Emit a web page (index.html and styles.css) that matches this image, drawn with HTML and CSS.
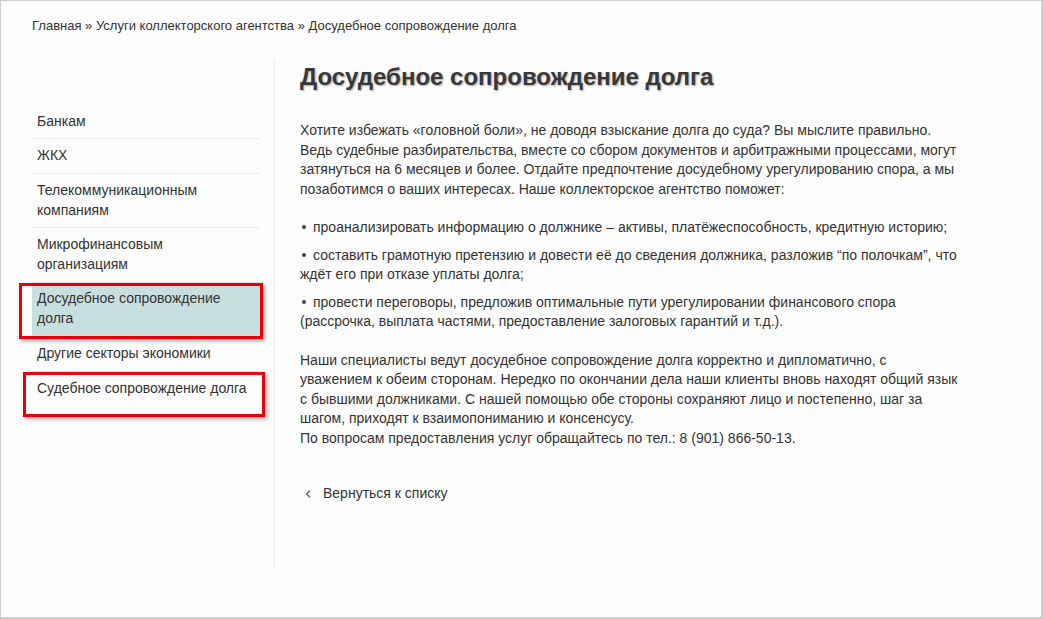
FILE: index.html
```html
<!DOCTYPE html>
<html lang="ru">
<head>
<meta charset="utf-8">
<title>Досудебное сопровождение долга</title>
<link rel="stylesheet" href="styles.css">
</head>
<body>
<div class="frame">
  <div class="breadcrumb">
    <a href="#">Главная</a> <span class="sep">»</span> <a href="#">Услуги коллекторского агентства</a> <span class="sep">»</span> <span class="current">Досудебное сопровождение долга</span>
  </div>
  <div class="columns">
    <aside class="sidebar">
      <div class="side-title">Продукция</div>
      <ul class="side-menu">
        <li><a href="#">Банкам</a></li>
        <li><a href="#">ЖКХ</a></li>
        <li><a href="#">Телекоммуникационным компаниям</a></li>
        <li><a href="#">Микрофинансовым организациям</a></li>
        <li class="active"><a href="#">Досудебное сопровождение долга</a></li>
        <li><a href="#">Другие секторы экономики</a></li>
        <li class="plain"><a href="#">Судебное сопровождение долга</a></li>
      </ul>
    </aside>
    <main class="content">
      <h1 class="title">Досудебное сопровождение долга</h1>
      <p>Хотите избежать «головной боли», не доводя взыскание долга до суда? Вы мыслите правильно. Ведь судебные разбирательства, вместе со сбором документов и арбитражными процессами, могут затянуться на 6 месяцев и более. Отдайте предпочтение досудебному урегулированию спора, а мы позаботимся о ваших интересах. Наше коллекторское агентство поможет:</p>
      <ul class="bullets">
        <li>проанализировать информацию о должнике – активы, платёжеспособность, кредитную историю;</li>
        <li>составить грамотную претензию и довести её до сведения должника, разложив “по полочкам”, что ждёт его при отказе уплаты долга;</li>
        <li>провести переговоры, предложив оптимальные пути урегулировании финансового спора (рассрочка, выплата частями, предоставление залоговых гарантий и т.д.).</li>
      </ul>
      <p>Наши специалисты ведут досудебное сопровождение долга корректно и дипломатично, с уважением к обеим сторонам. Нередко по окончании дела наши клиенты вновь находят общий язык с бывшими должниками. С нашей помощью обе стороны сохраняют лицо и постепенно, шаг за шагом, приходят к взаимопониманию и консенсусу.<br>По вопросам предоставления услуг обращайтесь по тел.: 8 (901) 866-50-13.</p>
      <a class="back" href="#"><svg class="chev" width="6" height="8" viewBox="0 0 6 8"><path d="M5 0.8 L1.5 4 L5 7.2" fill="none" stroke="#555" stroke-width="1.2"/></svg>Вернуться к списку</a>
    </main>
  </div>
  <div class="mark mark-1"></div>
  <div class="mark mark-2"></div>
</div>
</body>
</html>
```

FILE: styles.css
```css
html, body {
  margin: 0;
  padding: 0;
  background: #fdfdfd;
}
body {
  font-family: Arial, "Liberation Sans", sans-serif;
  color: #333;
}
a {
  color: inherit;
  text-decoration: none;
}
.frame {
  position: relative;
  box-sizing: border-box;
  width: 1043px;
  height: 619px;
  border: 1px solid #cdcdcd;
  border-right-width: 2px;
  border-bottom-width: 2px;
  background: #fdfdfd;
  padding: 0 0 0 31px;
}
.breadcrumb {
  font-size: 13px;
  line-height: 16px;
  padding-top: 17px;
  margin-bottom: 26px;
  color: #333;
}
.columns {
  display: flex;
  align-items: stretch;
}
.sidebar {
  width: 228px;
  margin-right: 14px;
}
.side-title {
  color: #ffffff;
  font-size: 18px;
  font-weight: bold;
  line-height: 20px;
  margin-bottom: 25px;
}
.side-menu {
  list-style: none;
  margin: 0;
  padding: 0;
}
.side-menu li {
  font-size: 14px;
  line-height: 20.3px;
  padding: 6px 5px 7px 5px;
  border-bottom: 1px solid #ebebeb;
  color: #333;
}
.side-menu li.active {
  background: #c8dfe0;
  padding-top: 5px;
  padding-bottom: 8px;
}
.side-menu li.plain {
  border-bottom: none;
}
.content {
  border-left: 1px solid #eaeaea;
  padding-left: 25px;
  width: 660px;
  min-height: 508px;
  font-size: 14px;
  line-height: 19.5px;
  color: #333;
}
.title {
  font-size: 24px;
  line-height: 28px;
  font-weight: bold;
  color: #383838;
  margin: 3px 0 30px 0;
  text-shadow: 1px 1px 2px rgba(0, 0, 0, 0.35);
}
.content p {
  margin: 0 0 19px 0;
}
.bullets {
  list-style: none;
  margin: 0 0 19px 0;
  padding: 0;
}
.bullets li + li {
  margin-top: 8px;
}
.bullets li::before {
  content: "";
  display: inline-block;
  width: 4px;
  height: 4px;
  border-radius: 50%;
  background: #444;
  vertical-align: middle;
  margin: 0 7px 2px 2px;
}
.back {
  display: inline-flex;
  align-items: center;
  margin-top: 17px;
  color: #333;
}
.chev {
  margin: 0 12px 0 5px;
}
.mark {
  position: absolute;
  border: 3px solid #e8000b;
  box-shadow: 2px 2px 4px rgba(0, 0, 0, 0.35);
}
.mark-1 {
  left: 18px;
  top: 282px;
  width: 238px;
  height: 50px;
}
.mark-2 {
  left: 22px;
  top: 371px;
  width: 236px;
  height: 39px;
}
```
